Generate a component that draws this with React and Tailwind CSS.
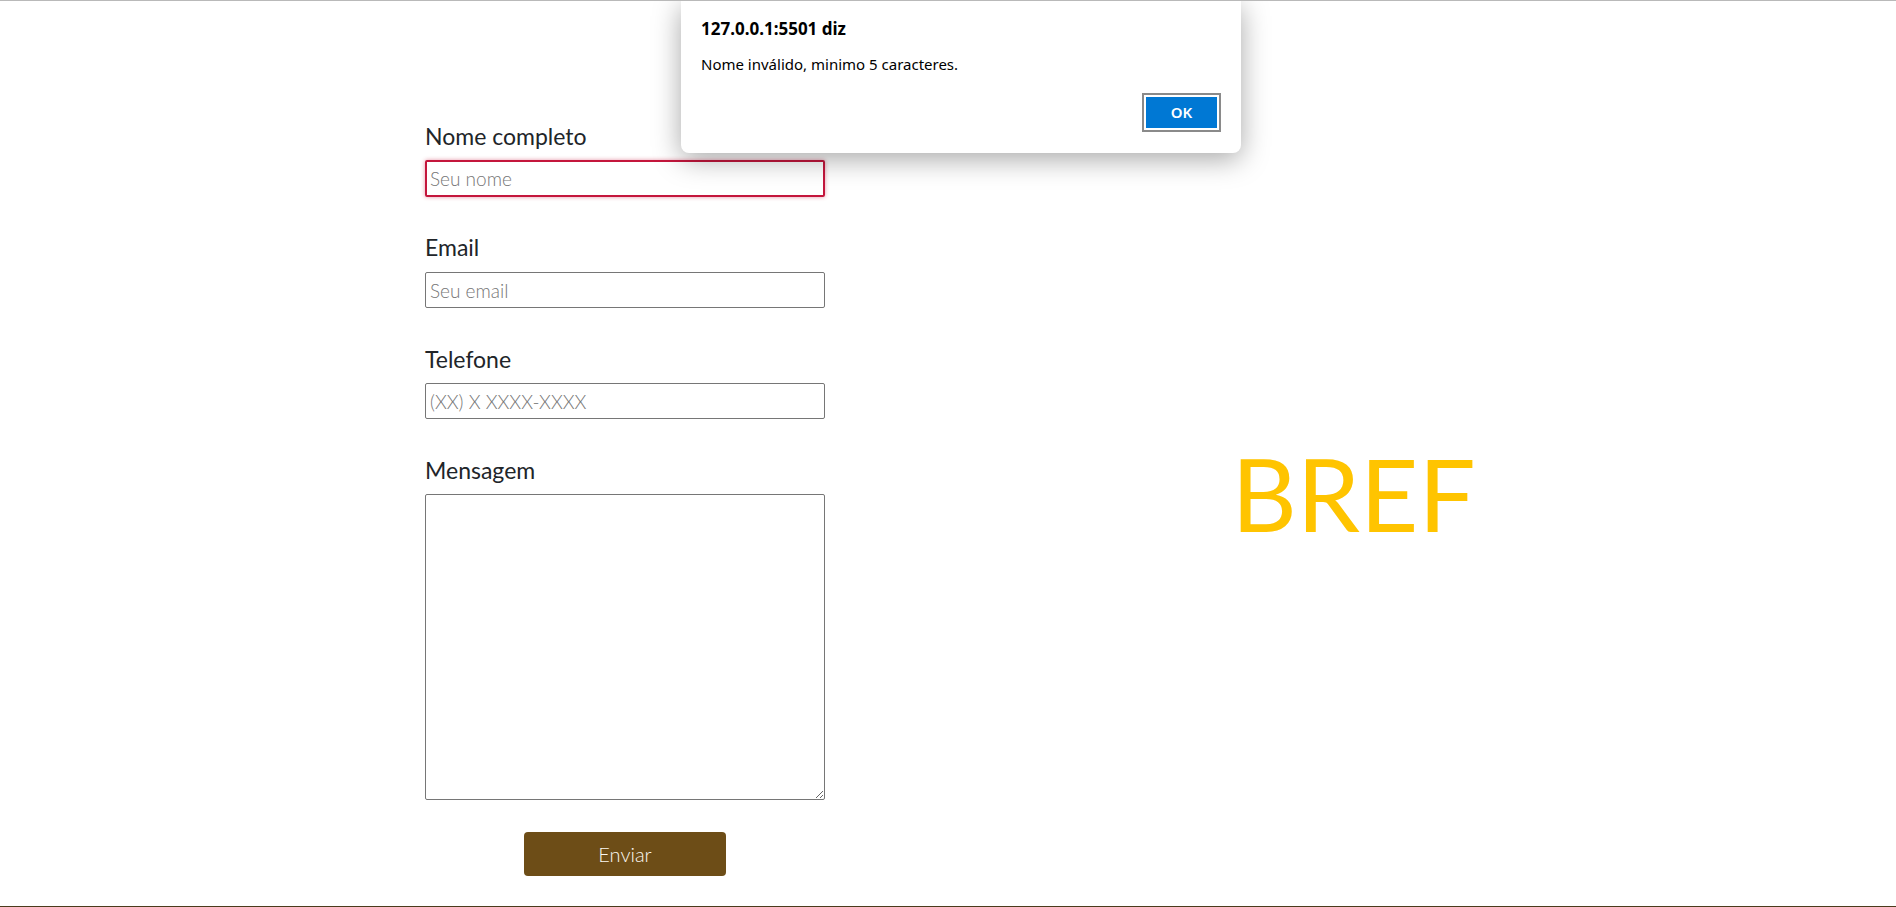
export default function App() {
  return (
    <div className="relative h-screen bg-white border-t border-b border-[#b9b9b9] border-b-[#4a3b1c] overflow-hidden font-['Lato',sans-serif]">
      <div className="flex pt-[121px]">
        {/* Contact form */}
        <form className="ml-[425px] w-[400px] flex flex-col" onSubmit={(e) => e.preventDefault()}>
          <label className="text-[23px] leading-[28px] text-[#212529] mb-[10px]">Nome completo</label>
          <input
            type="text"
            placeholder="Seu nome"
            className="h-[37px] border-2 border-[#c4163c] rounded-[2px] px-[3px] text-[19px] font-light placeholder:text-[#767676] shadow-[0_0_4px_rgba(200,20,60,0.45)] outline-none"
          />

          <label className="text-[23px] leading-[28px] text-[#212529] mt-[36px] mb-[11px]">Email</label>
          <input
            type="email"
            placeholder="Seu email"
            className="h-[36px] border border-[#767676] rounded-[2px] px-[4px] text-[19px] font-light placeholder:text-[#767676] outline-none"
          />

          <label className="text-[23px] leading-[28px] text-[#212529] mt-[37px] mb-[10px]">Telefone</label>
          <input
            type="tel"
            placeholder="(XX) X XXXX-XXXX"
            className="h-[36px] border border-[#767676] rounded-[2px] px-[4px] text-[19px] font-light placeholder:text-[#767676] outline-none"
          />

          <label className="text-[23px] leading-[28px] text-[#212529] mt-[37px] mb-[10px]">Mensagem</label>
          <textarea className="h-[306px] border border-[#767676] rounded-[2px] p-1 text-[19px] font-light outline-none" />

          <button
            type="submit"
            className="self-center mt-[32px] w-[202px] h-[44px] rounded-[4px] bg-[#6d4d17] text-[#fbf8f2] text-[20px] font-light"
          >
            Enviar
          </button>
        </form>

        {/* Brand */}
        <div className="flex-1 flex items-center justify-center">
          <span className="text-[101px] leading-none text-[#ffc400] mt-[-12px] mr-[14px]">BREF</span>
        </div>
      </div>

      {/* Browser alert dialog */}
      <div className="absolute top-0 left-[681px] w-[560px] h-[152px] bg-white rounded-b-[8px] shadow-[0_6px_28px_rgba(0,0,0,0.35)] px-[20px] pt-[16px] font-['Noto_Sans',sans-serif] text-black">
        <p className="text-[17px] leading-[23px] font-bold">127.0.0.1:5501 diz</p>
        <p className="mt-[14px] text-[15px] leading-[20px]">Nome inválido, minimo 5 caracteres.</p>
        <div className="flex justify-end mt-[19px]">
          <button className="w-[79px] h-[39px] border-2 border-[#8a8a8a] bg-[#0078d4] shadow-[inset_0_0_0_2px_white] text-white text-[15px] font-semibold">
            OK
          </button>
        </div>
      </div>
    </div>
  );
}
